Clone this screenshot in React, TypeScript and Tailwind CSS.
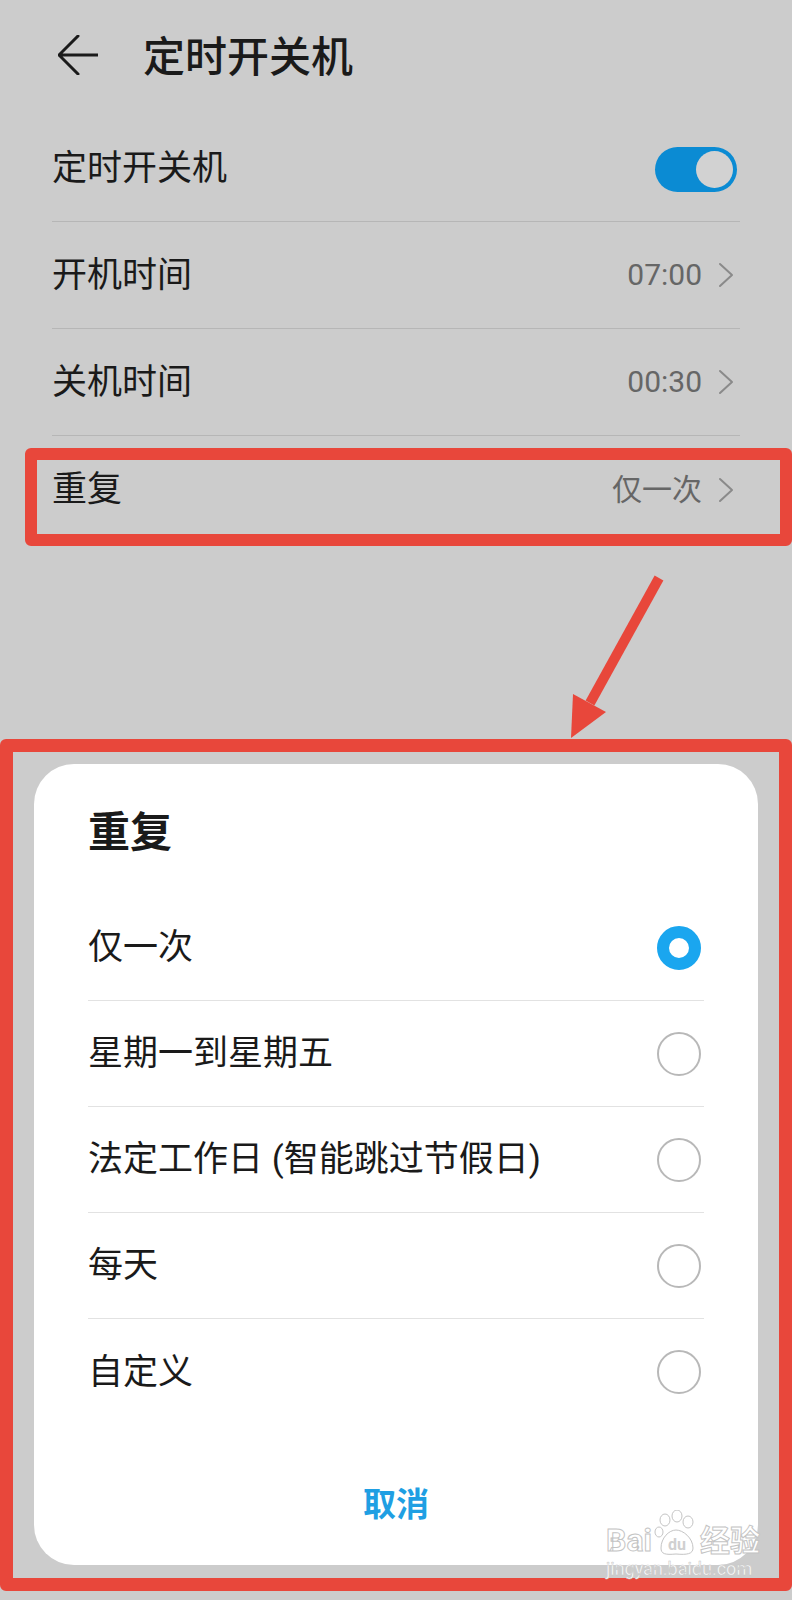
import { useState } from "react";

const rows = [
  { label: "开机时间", value: "07:00" },
  { label: "关机时间", value: "00:30" },
  { label: "重复", value: "仅一次" },
];

const options = ["仅一次", "星期一到星期五", "法定工作日 (智能跳过节假日)", "每天", "自定义"];

function Chevron() {
  return (
    <svg width="18" height="26" viewBox="0 0 18 26" fill="none">
      <path d="M3 2 L15 13 L3 24" stroke="#8a8a8a" strokeWidth="2" strokeLinecap="round" strokeLinejoin="round" />
    </svg>
  );
}

function Radio({ checked }: { checked: boolean }) {
  if (checked) {
    return <div className="h-[44px] w-[44px] rounded-full border-[12px] border-[#1aa6ef] bg-white" />;
  }
  return <div className="h-[44px] w-[44px] rounded-full border-2 border-[#b8b8b8] bg-white" />;
}

export default function App() {
  const [selected, setSelected] = useState(0);

  return (
    <div className="relative flex h-[1600px] w-[792px] flex-col overflow-hidden bg-[#cccccc] font-['Roboto','Noto_Sans_CJK_SC',sans-serif] text-[#1a1a1a]">
      {/* header */}
      <div className="flex h-[115px] shrink-0 items-center pl-[58px]">
        <svg width="40" height="40" viewBox="0 0 40 40" fill="none" className="mb-[6px]">
          <path d="M1 20 L20 1 M1 20 L20 39 M1 20 H40" stroke="#1a1a1a" strokeWidth="3" strokeLinecap="round" />
        </svg>
        <h1 className="ml-[45px] text-[42px] leading-none font-medium">定时开关机</h1>
      </div>

      {/* settings list */}
      <div className="flex flex-col px-[52px]">
        <div className="flex h-[107px] items-center justify-between border-b border-[#b6b6b6] pr-[3px]">
          <span className="text-[35px] leading-none">定时开关机</span>
          <div className="mt-[3px] flex h-[45px] w-[82px] items-center justify-end rounded-full bg-[#0b8bd3] p-[4px]">
            <div className="h-[37px] w-[37px] rounded-full bg-[#d2d2d2]" />
          </div>
        </div>
        {rows.map((row, i) => (
          <div
            key={row.label}
            className={
              i < rows.length - 1
                ? "flex h-[107px] items-center justify-between border-b border-[#b6b6b6] pr-[5px]"
                : "flex h-[107px] items-center justify-between pr-[5px]"
            }
          >
            <span className="text-[35px] leading-none">{row.label}</span>
            <div className="flex items-center gap-[15px]">
              <span className="text-[30px] leading-none text-[#666666]">{row.value}</span>
              <Chevron />
            </div>
          </div>
        ))}
      </div>

      <div className="h-[221px] shrink-0" />

      {/* dialog */}
      <div className="mx-[34px] flex h-[801px] flex-col rounded-[40px] bg-white px-[54px]">
        <div className="flex h-[131px] items-center pt-[7px]">
          <h2 className="text-[42px] leading-none font-bold">重复</h2>
        </div>
        {options.map((opt, i) => (
          <button
            key={opt}
            onClick={() => setSelected(i)}
            className={
              i < options.length - 1
                ? "flex h-[106px] items-center justify-between border-b border-[#e2e2e2] pr-[3px] text-left"
                : "flex h-[106px] items-center justify-between pr-[3px] text-left"
            }
          >
            <span className="text-[35px] leading-none">{opt}</span>
            <Radio checked={selected === i} />
          </button>
        ))}
        <div className="flex h-[140px] items-center justify-center pt-[18px]">
          <span className="text-[33px] leading-none font-bold text-[#1f9fe3]">取消</span>
        </div>
      </div>

      {/* annotations */}
      <div className="absolute top-[448px] left-[25px] h-[98px] w-[767px] rounded-[6px] border-[12px] border-[#e8473b]" />
      <div className="absolute top-[739px] left-0 h-[852px] w-[792px] rounded-[6px] border-[13px] border-[#e8473b]" />
      <svg className="absolute top-0 left-0" width="792" height="760" viewBox="0 0 792 760" fill="none">
        <line x1="659" y1="578" x2="590" y2="703" stroke="#e8473b" strokeWidth="10" />
        <polygon points="571,738 606,712 573,694" fill="#e8473b" />
      </svg>

      {/* watermark */}
      <div className="absolute top-[1510px] left-[606px] flex flex-col items-start text-white">
        <div className="flex items-end">
          <span className="text-[32px] leading-none font-bold [-webkit-text-stroke:1px_#c4c4c4]">Bai</span>
          <svg width="46" height="46" viewBox="0 0 46 46" fill="none" className="mx-[1px]">
            <ellipse cx="12" cy="10" rx="5" ry="6" fill="white" stroke="#c4c4c4" />
            <ellipse cx="24" cy="6" rx="5" ry="6" fill="white" stroke="#c4c4c4" />
            <ellipse cx="35" cy="12" rx="5" ry="6" fill="white" stroke="#c4c4c4" />
            <ellipse cx="6" cy="22" rx="4" ry="5" fill="white" stroke="#c4c4c4" />
            <path d="M8 38 C8 28 16 20 23 20 C30 20 40 28 40 38 C40 44 34 45 23 44 C12 45 8 44 8 38 Z" fill="white" stroke="#c4c4c4" />
            <text x="24" y="40" textAnchor="middle" fontSize="16" fontWeight="bold" fill="#d0d0d0" fontFamily="Roboto, sans-serif">du</text>
          </svg>
          <span className="text-[30px] leading-none font-bold [-webkit-text-stroke:1px_#c4c4c4]">经验</span>
        </div>
        <span className="mt-[4px] text-[18px] leading-none [-webkit-text-stroke:0.5px_#c4c4c4]">jingyan.baidu.com</span>
      </div>
    </div>
  );
}
